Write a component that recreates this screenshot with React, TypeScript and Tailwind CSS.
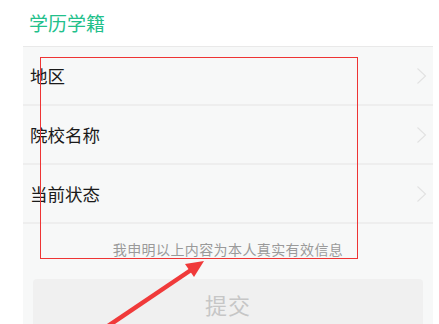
import React from "react";

const Chevron = () => (
  <svg width="11" height="18" viewBox="0 0 11 18" fill="none">
    <path d="M1.5 1.5 L9.5 9 L1.5 16.5" stroke="#e2e2e2" strokeWidth="1.1" />
  </svg>
);

const Row = ({ label }: { label: string }) => (
  <div className="h-[59px] flex items-center justify-between pl-[7px] pr-[6px] border-b-2 border-[#eeeeee]">
    <span className="text-[17.5px] text-[#1a1a1a] leading-none">{label}</span>
    <Chevron />
  </div>
);

export default function App() {
  return (
    <div className="relative w-[439px] h-[324px] overflow-hidden bg-white font-['Noto_Sans_CJK_SC','Noto_Sans',sans-serif]">
      <div className="h-[46px] pl-[29px] pb-[2px] flex items-center text-[19px] text-[#22c08b] leading-none">
        学历学籍
      </div>
      <div className="ml-[23px] w-[410px] h-[278px] bg-[#f7f8f8] border-t border-[#e9e9e9]">
        <Row label="地区" />
        <Row label="院校名称" />
        <Row label="当前状态" />
        <div className="mt-[15px] h-[20px] leading-[20px] text-center text-[14px] tracking-[0.4px] text-[#9a9a9a]">
          我申明以上内容为本人真实有效信息
        </div>
        <div className="mt-[20px] mx-[10px] h-[50px] rounded-[4px] bg-[#f0f0f0] flex items-center justify-center text-[22px] text-[#c6c6c6] tracking-[1px]">
          提交
        </div>
      </div>
      <div className="absolute left-[40px] top-[57px] w-[318px] h-[202px] border border-[#ee3434]" />
      <svg className="absolute inset-0" width="439" height="324" viewBox="0 0 439 324">
        <line x1="108" y1="326" x2="191" y2="270" stroke="#f03a3a" strokeWidth="4.5" />
        <polygon points="204,261 185,264 194,277" fill="#f03a3a" />
      </svg>
    </div>
  );
}
